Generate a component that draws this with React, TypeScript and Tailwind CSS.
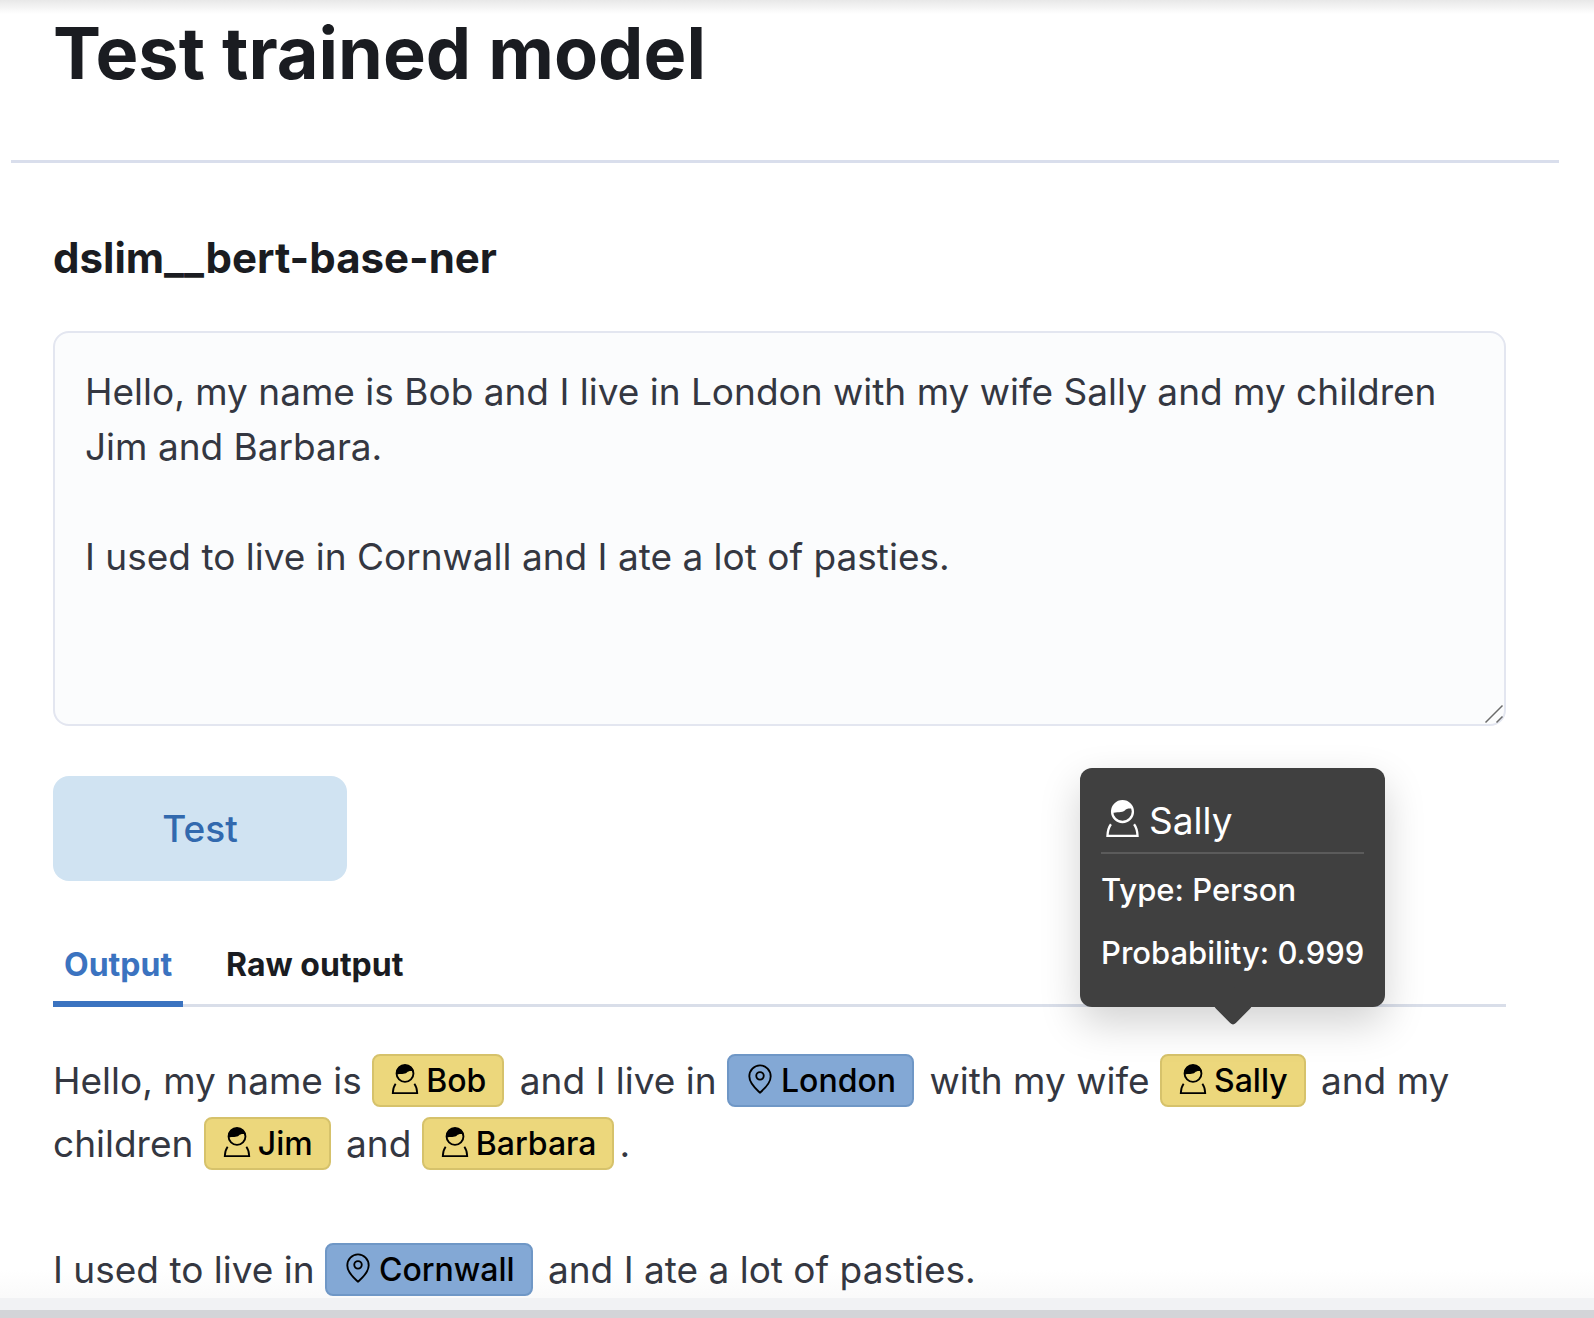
import React from 'react';

type EntityType = 'person' | 'location';

interface IconProps {
  className?: string;
}

interface EntityProps {
  type: EntityType;
  children: string;
}

const UserIcon: React.FC<IconProps> = ({ className = '' }) => (
  <svg viewBox="0 0 16 16" className={className} fill="none" stroke="currentColor" aria-hidden="true">
    <circle cx="8" cy="5" r="4.5" />
    <path d="M3.500 5.600C3 2.600 5 .5 8 .5c2.700 0 4.300 1.500 4.500 3.400-1.500-.4-2.700-.2-3.500.6-1.200 1.100-3.500.5-5.500 1.100z" fill="currentColor" stroke="none" />
    <path d="M3 10.500c-.9 1.200-1.400 2.900-1.500 5h13c-.1-2.100-.6-3.800-1.500-5" />
  </svg>
);

const PinIcon: React.FC<IconProps> = ({ className = '' }) => (
  <svg viewBox="0 0 16 16" className={className} fill="none" stroke="currentColor" aria-hidden="true">
    <path d="M8 15.300c-1.200-1.200-5.700-4.500-5.700-8.700a5.700 5.900 0 0 1 11.400 0c0 4.200-4.500 7.500-5.700 8.700z" />
    <circle cx="8" cy="6.300" r="2" />
  </svg>
);

const ENTITY_STYLES = {
  person: { icon: UserIcon, color: 'bg-[#ecd77c] border-[#d6c26b]' },
  location: { icon: PinIcon, color: 'bg-[#83a8d5] border-[#6f97c6]' },
};

const Entity: React.FC<EntityProps> = ({ type, children }) => {
  const { icon: Icon, color } = ENTITY_STYLES[type];
  return (
    <span
      className={`mr-[5px] inline-flex h-[53px] items-baseline gap-1.5 rounded-lg border-2 px-4 align-[2px] text-[32px] leading-[49px] font-medium text-black ${color}`}
    >
      <Icon className="mb-1 size-[30px] self-center" />
      {children}
    </span>
  );
};

const EntityTooltip: React.FC = () => (
  <div
    role="tooltip"
    className="absolute right-1/2 bottom-[105px] z-10 w-max min-w-[305px] translate-x-[150px] rounded-xl bg-[#404040] px-[21px] pt-[21px] pb-[23px] text-[31px] leading-[63px] font-medium text-white shadow-[0_16px_40px_rgba(0,0,0,0.18)]"
  >
    <div className="mb-1 flex items-center gap-2 border-b-2 border-[#5b5b5b] pl-[3px] text-[37px] font-normal">
      <UserIcon className="mb-1 size-[37px]" />
      Sally
    </div>
    <div>Type: Person</div>
    <div>Probability: 0.999</div>
    <div className="absolute -bottom-[13px] left-1/2 size-7 -translate-x-1/2 rotate-45 rounded-sm bg-[#404040]" />
  </div>
);

const SAMPLE_TEXT = `Hello, my name is Bob and I live in London with my wife Sally and my children Jim and Barbara.

I used to live in Cornwall and I ate a lot of pasties.`;

export default function App() {
  return (
    <div className="flex min-h-screen flex-col bg-[linear-gradient(to_bottom,#e8e8e8,#ffffff_14px)] font-[Inter,sans-serif] text-[#343741]">
      <header className="mr-[35px] ml-[11px] border-b-[3px] border-[#d9deec] px-[42px] pt-2 pb-[62px]">
        <h1 className="text-[72px] leading-[90px] font-bold text-[#1a1c21]">Test trained model</h1>
      </header>

      <main className="grow bg-[linear-gradient(to_top,#f9f9f9,#ffffff_32px)] pr-[88px] pl-[53px]">
        <h2 className="pt-16 text-[42px] leading-[62px] font-bold text-[#1a1c21]">
          <label htmlFor="input-text">dslim__bert-base-ner</label>
        </h2>
        <div className="relative mt-[42px]">
          <textarea
            id="input-text"
            defaultValue={SAMPLE_TEXT}
            className="block h-[395px] w-full resize-none rounded-2xl border-2 border-[#e3e6f0] bg-[#fbfcfd] px-[30px] py-[31px] text-[37px] leading-[55px]"
          />
          {/* Resize grip */}
          <svg viewBox="0 0 20 20" className="pointer-events-none absolute right-0.5 bottom-0.5 size-5" stroke="#6b6b6b" strokeWidth="1.5" aria-hidden="true">
            <path d="M1.500 18.500l17-17M12.500 18.500l6-6" />
          </svg>
        </div>
        <button type="button" className="mt-[50px] h-[105px] w-[294px] rounded-2xl bg-[#d0e3f2] text-[37px] font-medium text-[#3269ae]">
          Test
        </button>

        <div role="tablist" className="mt-12 flex h-[78px] gap-8 border-b-[3px] border-[#d9dee9] text-[32px] font-bold">
          <button type="button" role="tab" aria-selected="true" className="-mb-[3px] border-b-[6px] border-[#3b73c0] px-[11px] text-[#3b73c0]">
            Output
          </button>
          <button type="button" role="tab" aria-selected="false" className="-mb-[3px] border-b-[6px] border-transparent px-[11px] text-[#1a1c21]">
            Raw output
          </button>
        </div>

        <div className="pt-[42px] text-[37px] leading-[63px]">
          <p>
            Hello, my name is <Entity type="person">Bob</Entity> and I live in <Entity type="location">London</Entity> with my wife{' '}
            <span className="relative inline-block">
              <EntityTooltip />
              <Entity type="person">Sally</Entity>
            </span>{' '}
            and my children <Entity type="person">Jim</Entity> and <Entity type="person">Barbara</Entity>.
          </p>
          <p className="mt-[63px]">
            I used to live in <Entity type="location">Cornwall</Entity> and I ate a lot of pasties.
          </p>
        </div>
      </main>

      <footer className="-mt-1 h-5 border-b-8 border-[#d3d4d8] bg-[#f1f2f4]" />
    </div>
  );
}
